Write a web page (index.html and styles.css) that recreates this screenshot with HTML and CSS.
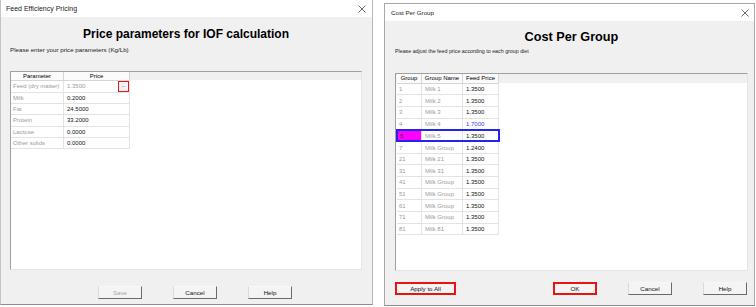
FILE: index.html
```html
<!DOCTYPE html>
<html>
<head>
  <title>Feed Efficiency Pricing</title>
  <link rel="stylesheet" href="styles.css">
</head>
<body>

<div class="screen">

  <!-- Price parameters dialog -->
  <div class="dialog dlg-left">
    <div class="titlebar">
      <span class="title">Feed Efficiency Pricing</span>
      <svg class="close" width="8" height="8" viewBox="0 0 8 8"><path d="M0.5 0.5L7.5 7.5M7.5 0.5L0.5 7.5" stroke="#444" stroke-width="0.8"/></svg>
    </div>
    <div class="dlg-body">
      <h1 class="heading">Price parameters for IOF calculation</h1>
      <p class="hint">Please enter your price parameters (Kg/Lb)</p>
      <div class="frame">
        <table class="grid params">
          <tr class="head"><th class="c-param">Parameter</th><th class="c-price">Price</th></tr>
          <tr><td class="dim">Feed (dry matter)</td><td><div class="cell-edit"><span class="dim">1.3500</span><span class="dots">...</span></div></td></tr>
          <tr><td class="dim">Milk</td><td>0.2000</td></tr>
          <tr><td class="dim">Fat</td><td>24.5000</td></tr>
          <tr><td class="dim">Protein</td><td>33.2000</td></tr>
          <tr><td class="dim">Lactose</td><td>0.0000</td></tr>
          <tr><td class="dim">Other solids</td><td>0.0000</td></tr>
        </table>
      </div>
      <div class="buttons left-buttons">
        <button class="btn" disabled>Save</button>
        <button class="btn">Cancel</button>
        <button class="btn">Help</button>
      </div>
    </div>
  </div>

  <!-- Cost per group dialog -->
  <div class="dialog dlg-right">
    <div class="titlebar">
      <span class="title small">Cost Per Group</span>
      <svg class="close" width="8" height="8" viewBox="0 0 8 8"><path d="M0.5 0.5L7.5 7.5M7.5 0.5L0.5 7.5" stroke="#444" stroke-width="0.8"/></svg>
    </div>
    <div class="dlg-body">
      <h1 class="heading big">Cost Per Group</h1>
      <p class="hint small">Please adjust the feed price according to each group diet</p>
      <div class="frame">
        <table class="grid groups">
          <tr class="head"><th class="c-group">Group</th><th class="c-name">Group Name</th><th class="c-feed">Feed Price</th></tr>
          <tr><td class="dim">1</td><td class="dim">Milk 1</td><td>1.3500</td></tr>
          <tr><td class="dim">2</td><td class="dim">Milk 2</td><td>1.3500</td></tr>
          <tr><td class="dim">3</td><td class="dim">Milk 3</td><td>1.3500</td></tr>
          <tr><td class="dim">4</td><td class="dim">Milk 4</td><td class="changed">1.7000</td></tr>
          <tr class="selected"><td class="pick">5</td><td class="dim">Milk 5</td><td>1.3500</td></tr>
          <tr><td class="dim">7</td><td class="dim">Milk Group</td><td>1.2400</td></tr>
          <tr><td class="dim">21</td><td class="dim">Milk 21</td><td>1.3500</td></tr>
          <tr><td class="dim">31</td><td class="dim">Milk 31</td><td>1.3500</td></tr>
          <tr><td class="dim">41</td><td class="dim">Milk Group</td><td>1.3500</td></tr>
          <tr><td class="dim">51</td><td class="dim">Milk Group</td><td>1.3500</td></tr>
          <tr><td class="dim">61</td><td class="dim">Milk Group</td><td>1.3500</td></tr>
          <tr><td class="dim">71</td><td class="dim">Milk Group</td><td>1.3500</td></tr>
          <tr><td class="dim">81</td><td class="dim">Milk 81</td><td>1.3500</td></tr>
        </table>
      </div>
      <div class="buttons right-buttons">
        <button class="btn wide marked">Apply to All</button>
        <button class="btn marked">OK</button>
        <button class="btn">Cancel</button>
        <button class="btn">Help</button>
      </div>
    </div>
  </div>

</div>

</body>
</html>
```

FILE: styles.css
```css
body { margin: 0; background: #fff; font-family: "Liberation Sans", Arial, sans-serif; color: #111; }
.screen { display: flex; align-items: flex-start; gap: 11px; }

/* dialogs */
.dialog { background: #f0f0f0; display: flex; flex-direction: column; box-sizing: border-box; }
.dlg-left { width: 373px; height: 305px; border-left: 1px solid #c4c4c4; border-right: 1px solid #b8b8b8; border-bottom: 1px solid #8c8c8c; }
.dlg-right { width: 371px; height: 303px; margin-top: 3px; border: 1px solid #a8a8a8; border-bottom-color: #8c8c8c; }

.titlebar { height: 17px; flex: none; background: #fff; display: flex; align-items: center; justify-content: space-between; padding: 0 6px 0 5px; }
.dlg-right .titlebar { padding: 0 5px 0 6px; }
.title { font-size: 7px; color: #222; }
.title.small { font-size: 6.2px; }
.close { display: block; }

.dlg-body { flex: 1; display: flex; flex-direction: column; padding: 0 10px 0 9px; }
.dlg-right .dlg-body { padding: 0 6px 0 10px; }

.heading { margin: 10px 0 0; font-size: 12px; line-height: 14px; font-weight: bold; text-align: center; color: #000; }
.heading.big { margin-top: 9px; font-size: 12.7px; line-height: 15px; }
.hint { margin: 5px 0 0; font-size: 6.2px; line-height: 8px; color: #222; }
.hint.small { margin-top: 3px; font-size: 5.3px; line-height: 7px; }

/* grid frame */
.frame { margin-top: 17px; height: 199px; box-sizing: border-box; border: 1px solid; border-color: #a0a0a0 #e6e6e6 #e6e6e6 #a0a0a0; background: linear-gradient(#f0f0f0 0 8px, #fff 8px); }
.dlg-right .frame { margin-top: 18px; height: 198px; background: linear-gradient(#f0f0f0 0 9px, #fff 9px); }

.grid { border-collapse: collapse; font-size: 6px; }
.grid th, .grid td { border: 1px solid #e3e3e3; padding: 0 0 0 2px; text-align: left; font-weight: normal; white-space: nowrap; }
.grid tr.head th { background: #fbfbfb; text-align: center; color: #000; padding: 0; border-color: #d6d6d6; }
.grid tr.head th:first-child, .grid tr td:first-child { border-left: none; }
.grid tr.head th { border-top: none; }

.params tr.head { height: 8px; }
.params tr { height: 11.4px; }
.c-param { width: 52px; }
.c-price { width: 65px; }
.params td + td { padding-left: 3px; }

.groups tr.head { height: 9px; }
.groups tr { height: 11.7px; }
.c-group { width: 24px; }
.c-name { width: 40px; }
.c-feed { width: 35px; }
.groups td + td { padding-left: 3px; }

.dim { color: #9a9a9a; }
.changed { color: #3a3aff; }

.cell-edit { display: flex; align-items: center; justify-content: space-between; }
.dots { width: 9px; height: 9px; border: 1px solid #e41b1b; background: #f2f2f2; color: #333; font-size: 5px; line-height: 6px; text-align: center; }

.groups tr.selected td { border-top: 2px solid #2424f0; border-bottom: 2px solid #2424f0; }
.groups tr.selected td:first-child { border-left: 2px solid #2424f0; }
.groups tr.selected td:last-child { border-right: 2px solid #2424f0; }
.pick { background: #ff00ff; color: #333; }

/* buttons */
.buttons { display: flex; gap: 31px; }
.left-buttons { margin-top: 16px; padding-left: 88px; }
.right-buttons { margin-top: 11px; }
.btn { width: 44px; height: 13px; box-sizing: border-box; padding: 0; font-family: "Liberation Sans", Arial, sans-serif; font-size: 6.2px; color: #111; background: #f4f4f4; border: 1px solid; border-color: #f8f8f8 #6a6a6a #6a6a6a #dadada; }
.btn:disabled { color: #a8a8a8; }
.btn.wide { width: 61px; margin-right: 66px; }
.btn.marked { border: 2px solid #e81414; }
```
